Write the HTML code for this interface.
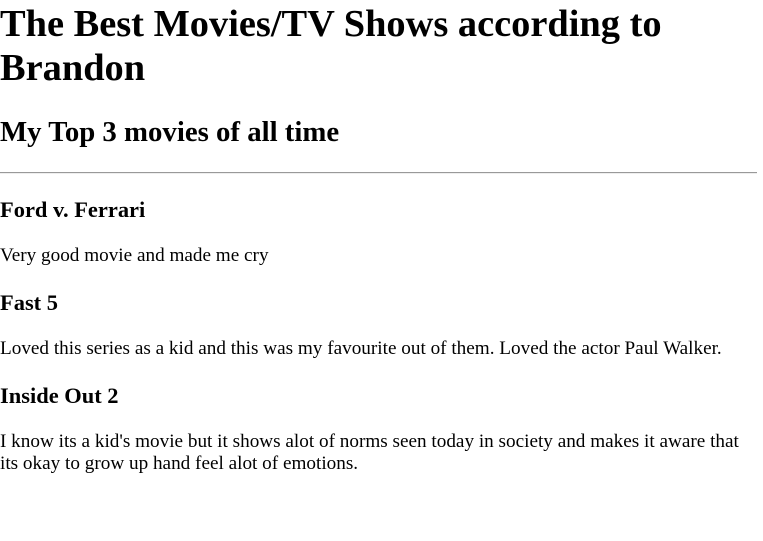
<!DOCTYPE html>
<html><head><style>
html{zoom:1.2}
body{margin:0;padding-top:1.5px;font-family:"Liberation Serif",serif;color:#000;background:#fff;width:631px}
h1{margin-top:0}
hr{border:none;border-top:1px solid #999;border-bottom:1px solid #eee}
</style></head><body>
<h1>The Best Movies/TV Shows according to Brandon</h1>
<h2>My Top 3 movies of all time</h2>
<hr>
<h3>Ford v. Ferrari</h3>
<p>Very good movie and made me cry</p>
<h3>Fast 5</h3>
<p>Loved this series as a kid and this was my favourite out of them. Loved the actor Paul Walker.</p>
<h3>Inside Out 2</h3>
<p>I know its a kid's movie but it shows alot of norms seen today in society and makes it aware that its okay to grow up hand feel alot of emotions.</p>
</body></html>
